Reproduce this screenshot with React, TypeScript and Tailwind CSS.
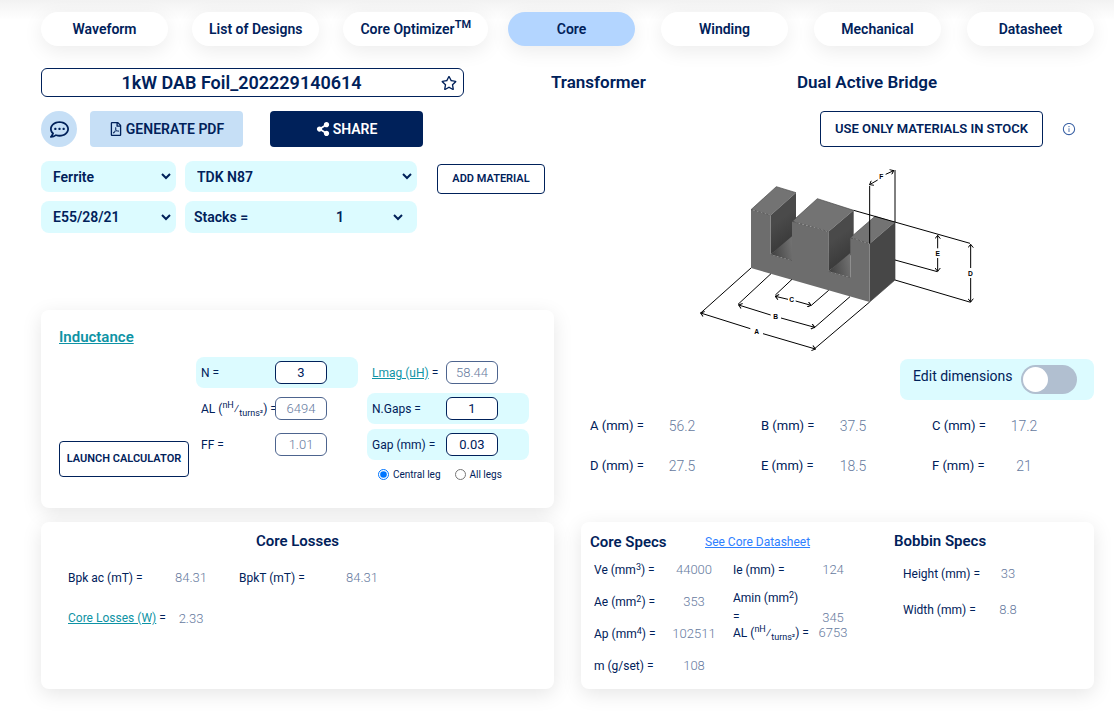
import React from "react";
import { FaRegCommentDots, FaRegFilePdf, FaRegStar, FaShareAlt } from "react-icons/fa";
import { AiOutlineInfoCircle } from "react-icons/ai";

type NavItem = { label: React.ReactNode; active?: boolean };

const leftNav: NavItem[] = [
  { label: "Waveform" },
  { label: "List of Designs" },
  { label: <>Core Optimizer<sup className="top-[-6px] text-[11px]">TM</sup></> },
];
const rightNav: NavItem[] = [
  { label: "Core", active: true },
  { label: "Winding" },
  { label: "Mechanical" },
  { label: "Datasheet" },
];

function NavButton({ label, active }: NavItem) {
  return (
    <button
      className={`h-[34px] min-w-[127px] rounded-full px-[17px] text-sm font-semibold whitespace-nowrap shadow-[0_5px_20px_rgba(0,0,0,0.08)] ${
        active ? "bg-[#b3d5ff]" : "bg-white"
      }`}
    >
      {label}
    </button>
  );
}

function Chevron({ className = "" }: { className?: string }) {
  return (
    <svg viewBox="0 0 10 7" aria-hidden="true" className={`pointer-events-none h-[7px] w-[10px] ${className}`}>
      <path d="M1 1l4 4 4-4" fill="none" stroke="#00215a" strokeWidth="2" />
    </svg>
  );
}

function SelectBox({ label, value, className }: { label: string; value: string; className: string }) {
  return (
    <div className={`relative flex items-center rounded-lg bg-[#dcfbff] ${className}`}>
      <select
        aria-label={label}
        defaultValue={value}
        className="h-full w-full appearance-none rounded-lg bg-transparent pl-3 text-sm font-semibold"
      >
        <option>{value}</option>
      </select>
      <Chevron className="absolute right-[5px]" />
    </div>
  );
}

function PerTurns() {
  return (
    <>
      (<sup className="top-[-5px] text-[9px]">nH</sup>⁄<sub className="bottom-[-3px] text-[9px]">turns²</sub>)
    </>
  );
}

function Field({
  id,
  label,
  value,
  editable,
}: {
  id: string;
  label: React.ReactNode;
  value: string;
  editable?: boolean;
}) {
  return (
    <div className={`flex h-[31px] w-[162px] items-center rounded-lg pl-[5px] ${editable ? "bg-[#dcfbff]" : ""}`}>
      <label htmlFor={id} className="w-[74px] text-xs whitespace-nowrap">
        {label}
      </label>
      <input
        id={id}
        defaultValue={value}
        readOnly={!editable}
        className={`h-[23px] w-[52px] rounded-md border bg-white text-center text-[13px] ${
          editable ? "border-[#00215a]" : "border-[#4d648e] font-light text-[#667a9e]"
        }`}
      />
    </div>
  );
}

function Pair({
  label,
  value,
  labelClass,
  valueClass,
}: {
  label: React.ReactNode;
  value: string;
  labelClass: string;
  valueClass: string;
}) {
  return (
    <div className="flex items-center">
      <span className={`whitespace-nowrap ${labelClass}`}>{label}</span>
      <output className={`text-center font-light text-[#667a9e] ${valueClass}`}>{value}</output>
    </div>
  );
}

const dimensions = [
  ["A", "56.2"],
  ["B", "37.5"],
  ["C", "17.2"],
  ["D", "27.5"],
  ["E", "18.5"],
  ["F", "21"],
];

const arrows = [
  "M32 456L181 503",
  "M376 564L219 518",
  "M146 432L242 462",
  "M374 499L273 471",
  "M256 406L294 415",
  "M363 433L317 420",
  "M539 71L563 57",
  "M611 29L587 40",
  "M743 223V262",
  "M743 331V291",
  "M842 250V321",
  "M842 423V351",
];

function CoreDrawing() {
  return (
    <svg viewBox="0 0 900 585" className="h-[195px] w-[300px]" role="img" aria-label="E core dimensions">
      <defs>
        <linearGradient id="wall" x1="0" y1="0" x2="0.3" y2="1">
          <stop offset="0.5" stopColor="#4a4a4a" />
          <stop offset="1" stopColor="#383838" />
        </linearGradient>
        <linearGradient id="floor" x1="0" y1="0.6" x2="1" y2="0.4">
          <stop offset="0" stopColor="#404040" />
          <stop offset="1" stopColor="#707070" />
        </linearGradient>
        <marker
          id="arrow"
          viewBox="0 0 16 18"
          refX="2"
          refY="9"
          markerWidth="16"
          markerHeight="18"
          markerUnits="userSpaceOnUse"
          orient="auto"
        >
          <path d="M12 1L2 9l10 8" fill="none" stroke="#000" strokeWidth="3" />
        </marker>
      </defs>
      <path d="M183 146L259 77L318 95L242 163z" fill="#737373" />
      <path d="M242 163L318 95V228L242 280z" fill="url(#wall)" />
      <path d="M242 280L306 226V299z" fill="url(#floor)" />
      <path d="M307 181L382 113L491 148L415 212z" fill="#737373" />
      <path d="M415 212L491 148V276L415 331z" fill="url(#wall)" />
      <path d="M415 331L481 276V349z" fill="url(#floor)" />
      <path d="M481 230L556 165L615 183L539 248z" fill="#737373" />
      <path d="M539 248L615 183V357L539 423z" fill="#474747" />
      <path
        d="M183 146L242 163V280L306 299V181L415 212V331L481 349V230L539 248V423L183 321z"
        fill="#6d6d6d"
      />
      <path
        d="M183 146L242 163M242 280L306 299M307 181L415 212M415 331L481 349M481 230L539 248"
        fill="none"
        stroke="#444"
        strokeWidth="2"
        strokeDasharray="7 5"
      />
      <path
        d="M183 146L259 77L318 95M307 181L382 113L491 148M481 230L556 165M615 183V357L539 423"
        fill="none"
        stroke="#444"
        strokeWidth="2"
      />
      <path
        d="M491 148L840 247M615 297L742 332M615 357L842 424M539 248V75M615 183V27M183 321L32 456M243 338L144 430M306 355L256 402M416 388L364 433M480 407L372 501M539 423L374 563"
        fill="none"
        stroke="#000"
        strokeWidth="3"
      />
      {arrows.map((d) => (
        <path key={d} d={d} fill="none" stroke="#000" strokeWidth="3" markerStart="url(#arrow)" />
      ))}
      <g fontFamily="Liberation Sans, sans-serif" fontSize="20" fontWeight="700" textAnchor="middle" fill="#000">
        <text x="200" y="518">A</text>
        <text x="257" y="474">B</text>
        <text x="305" y="424">C</text>
        <text x="841" y="345">D</text>
        <text x="743" y="285">E</text>
        <text x="574" y="54">F</text>
      </g>
    </svg>
  );
}

const card = "rounded-lg bg-white shadow-[0_5px_20px_rgba(0,0,0,0.1)]";

export default function App() {
  return (
    <div className="min-h-screen bg-[linear-gradient(#f2f2f2,#f5f5f5_4px,#fff_20px)] pr-5 pb-8 pl-[41px] font-[Roboto,'Noto_Sans',sans-serif] text-[13px] text-[#00215a]">
      <nav className="flex justify-between pt-3">
        <div className="flex gap-6">
          {leftNav.map((item, i) => (
            <NavButton key={i} {...item} />
          ))}
        </div>
        <div className="flex gap-[26px]">
          {rightNav.map((item, i) => (
            <NavButton key={i} {...item} />
          ))}
        </div>
      </nav>

      <header className="mt-[22px] flex h-[29px] items-center text-[17px] font-semibold">
        <div className="flex h-full w-[423px] items-center rounded-md border border-[#00215a] pr-1.5">
          <input
            aria-label="Design name"
            defaultValue="1kW DAB Foil_202229140614"
            className="w-full min-w-0 flex-1 bg-transparent text-center text-lg"
          />
          <button aria-label="Add to favorites">
            <FaRegStar className="size-4" />
          </button>
        </div>
        <h2 className="ml-[87px] w-[246px]">Transformer</h2>
        <h2>Dual Active Bridge</h2>
      </header>

      <div className="mt-3.5 flex items-center text-sm font-semibold">
        <button aria-label="Comments" className="flex size-9 items-center justify-center rounded-full bg-[#c6dff6]">
          <FaRegCommentDots className="size-[19px]" />
        </button>
        <button className="ml-[13px] flex h-9 w-[153px] items-center justify-center gap-[3px] rounded bg-[#c6dff6]">
          <FaRegFilePdf className="size-3.5" />
          GENERATE PDF
        </button>
        <button className="ml-[27px] flex h-9 w-[153px] items-center justify-center gap-[3px] rounded bg-[#00215a] text-white">
          <FaShareAlt className="size-3.5" />
          SHARE
        </button>
        <button className="ml-auto h-9 w-[223px] rounded border border-[#00215a] bg-white text-[13px] whitespace-nowrap">
          USE ONLY MATERIALS IN STOCK
        </button>
        <button aria-label="Information" className="mr-[18px] ml-[19px]">
          <AiOutlineInfoCircle className="size-[14px] text-[#3b62a5]" />
        </button>
      </div>

      <main className="mt-3.5 grid grid-cols-2 gap-x-[27px]">
        <section>
          <div className="flex h-[149px] items-start">
            <div className="flex flex-col gap-[9px]">
              <div className="flex gap-[9px]">
                <SelectBox label="Material type" value="Ferrite" className="h-[31px] w-[135px]" />
                <SelectBox label="Material" value="TDK N87" className="h-[31px] w-[232px]" />
              </div>
              <div className="flex gap-[9px]">
                <SelectBox label="Core size" value="E55/28/21" className="h-8 w-[135px]" />
                <div className="relative flex h-8 w-[232px] items-center rounded-lg bg-[#dcfbff] pl-[9px] text-sm font-semibold">
                  <label htmlFor="stacks" className="w-[142px]">
                    Stacks =
                  </label>
                  <select id="stacks" defaultValue="1" className="h-full w-[72px] appearance-none bg-transparent">
                    <option>1</option>
                  </select>
                  <Chevron className="absolute right-3.5" />
                </div>
              </div>
            </div>
            <button className="mt-[3px] ml-5 h-[30px] w-[108px] rounded border border-[#00215a] text-[11px] font-semibold whitespace-nowrap">
              ADD MATERIAL
            </button>
          </div>

          <div className={`flex h-[198px] pl-[18px] ${card}`}>
            <div className="flex w-[137px] flex-col items-start justify-between pt-4 pb-[31px]">
              <a href="#inductance" className="text-[15px] font-semibold text-[#0e93a5] underline">
                Inductance
              </a>
              <button className="h-9 w-[130px] rounded border border-[#00215a] text-[11px] font-semibold whitespace-nowrap">
                LAUNCH CALCULATOR
              </button>
            </div>
            <div className="flex flex-col gap-[5px] pt-[47px]">
              <Field id="n" label="N =" value="3" editable />
              <Field id="al" label={<>AL <PerTurns /> =</>} value="6494" />
              <Field id="ff" label="FF =" value="1.01" />
            </div>
            <div className="ml-[9px] flex flex-col gap-[5px] pt-[47px]">
              <Field
                id="lmag"
                label={<><a href="#lmag" className="text-[#0e93a5] underline">Lmag (uH)</a> =</>}
                value="58.44"
              />
              <Field id="gaps" label="N.Gaps =" value="1" editable />
              <Field id="gap" label="Gap (mm) =" value="0.03" editable />
              <div className="flex items-center gap-3.5 pt-0.5 pl-[11px] text-[10px]">
                <label className="flex items-center gap-1">
                  <input type="radio" name="leg" defaultChecked className="size-[11px] accent-[#0075ff]" />
                  Central leg
                </label>
                <label className="flex items-center gap-1">
                  <input type="radio" name="leg" className="size-[11px]" />
                  All legs
                </label>
              </div>
            </div>
          </div>

          <div className={`mt-3.5 h-[167px] px-[27px] pt-[7px] ${card}`}>
            <h3 className="text-center text-[15px] leading-6 font-semibold">Core Losses</h3>
            <div className="mt-[15px] flex gap-[19px]">
              <Pair label="Bpk ac (mT) =" value="84.31" labelClass="w-[94px] text-xs" valueClass="w-[58px]" />
              <Pair label="BpkT (mT) =" value="84.31" labelClass="w-[94px] text-xs" valueClass="w-[58px]" />
            </div>
            <div className="mt-[21px]">
              <Pair
                label={<><a href="#losses" className="text-[#0e93a5] underline">Core Losses (W)</a> =</>}
                value="2.33"
                labelClass="w-[94px] text-xs"
                valueClass="w-[58px]"
              />
            </div>
          </div>
        </section>

        <section className="flex flex-col">
          <div className="flex h-[198px] justify-center pl-1">
            <CoreDrawing />
          </div>
          <div className="flex h-[41px] w-[194px] items-center justify-between self-end rounded-lg bg-[#dcfbff] pr-[17px] pl-[13px]">
            <label htmlFor="edit" className="pb-2 text-sm">
              Edit dimensions
            </label>
            <input
              id="edit"
              type="checkbox"
              role="switch"
              className="h-[29px] w-14 appearance-none rounded-full bg-[#b1bfd0] p-0.5 before:block before:size-[25px] before:rounded-full before:bg-white checked:before:ml-auto"
            />
          </div>
          <div className="mt-4 grid grid-cols-3 gap-y-5 text-sm">
            {dimensions.map(([name, value]) => (
              <Pair
                key={name}
                label={`${name} (mm) =`}
                value={value}
                labelClass="w-[73px] pl-[9px] text-[13px]"
                valueClass="w-[56px]"
              />
            ))}
          </div>

          <div className={`mt-auto flex h-[167px] ${card}`}>
            <div className="pl-[9px]">
              <div className="flex h-8 items-center pt-2">
                <h3 className="w-[115px] text-[15px] font-semibold">Core Specs</h3>
                <a href="#datasheet" className="text-xs text-[#2f80ff] underline">
                  See Core Datasheet
                </a>
              </div>
              <div className="flex pl-1">
                <div className="grid auto-rows-[32px] content-start">
                  <Pair label={<>Ve (mm<sup>3</sup>) =</>} value="44000" labelClass="w-[72px] text-xs" valueClass="w-[56px]" />
                  <Pair label={<>Ae (mm<sup>2</sup>) =</>} value="353" labelClass="w-[72px] text-xs" valueClass="w-[56px]" />
                  <Pair label={<>Ap (mm<sup>4</sup>) =</>} value="102511" labelClass="w-[72px] text-xs" valueClass="w-[56px]" />
                  <Pair label="m (g/set) =" value="108" labelClass="w-[72px] text-xs" valueClass="w-[56px]" />
                </div>
                <div className="ml-[11px] grid grid-rows-[32px_41px_12px] content-start">
                  <Pair label="Ie (mm) =" value="124" labelClass="w-[72px] text-xs" valueClass="w-[56px]" />
                  <div className="flex items-end leading-[19px]">
                    <span className="w-[72px] text-xs leading-[19px]">
                      Amin (mm<sup>2</sup>)
                      <br />=
                    </span>
                    <output className="w-[56px] text-center font-light text-[#667a9e]">345</output>
                  </div>
                  <Pair label={<>AL <PerTurns /> =</>} value="6753" labelClass="w-[72px] text-xs" valueClass="w-[56px]" />
                </div>
              </div>
            </div>
            <div className="ml-[33px] pt-[7px]">
              <h3 className="text-[15px] leading-6 font-semibold">Bobbin Specs</h3>
              <div className="mt-[3px] grid auto-rows-[36px] pl-[9px]">
                <Pair label="Height (mm) =" value="33" labelClass="w-[77px] text-xs" valueClass="w-[56px]" />
                <Pair label="Width (mm) =" value="8.8" labelClass="w-[77px] text-xs" valueClass="w-[56px]" />
              </div>
            </div>
          </div>
        </section>
      </main>
    </div>
  );
}
